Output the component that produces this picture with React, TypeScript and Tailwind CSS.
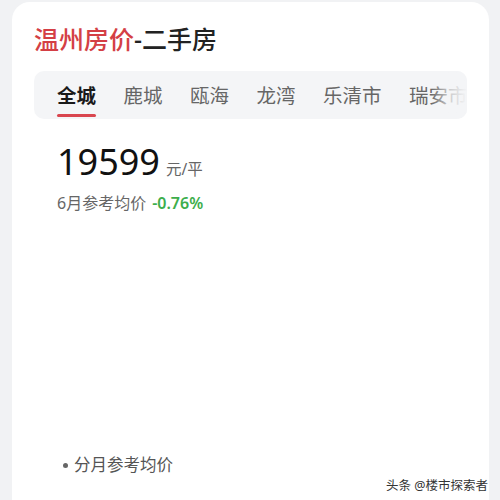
const tabs = ['全城', '鹿城', '瓯海', '龙湾', '乐清市', '瑞安市'];

export default function App() {
  return (
    <div
      className="relative w-[500px] h-[500px] overflow-hidden bg-[#f1f2f4] pl-[12px] pr-[11px] pt-[2px]"
      style={{ fontFamily: '"Noto Sans", "Noto Sans CJK SC", sans-serif' }}
    >
      <div className="h-full bg-white rounded-t-[18px] px-[22px] pt-[21px]">
        {/* Title */}
        <h1 className="text-[25px] leading-[32px] font-medium text-[#222]">
          <span className="text-[#d43f45]">温州房价</span>-二手房
        </h1>

        {/* District tabs */}
        <div className="relative mt-[16px] h-[48px] rounded-[10px] bg-[#f4f5f7] overflow-hidden">
          <div className="flex h-full gap-[27.5px] pl-[23px] whitespace-nowrap">
            {tabs.map((t, i) => (
              <div key={t} className="flex h-full flex-col items-center justify-end pb-[2px] shrink-0">
                <span
                  className={`text-[19.5px] leading-[26px] ${
                    i === 0 ? 'font-bold text-[#1a1a1a]' : 'text-[#666]'
                  }`}
                >
                  {t}
                </span>
                <span
                  className={`mt-[5px] h-[3px] w-full rounded-full ${
                    i === 0 ? 'bg-[#d9464f]' : 'bg-transparent'
                  }`}
                ></span>
              </div>
            ))}
          </div>
          <div className="absolute right-0 top-0 h-full w-[36px] bg-gradient-to-l from-[#f4f5f7] via-[#f4f5f7]/70 to-transparent"></div>
        </div>

        {/* Price */}
        <div className="pl-[23px]">
          <div className="mt-[25px] flex items-baseline gap-[6px]">
            <span className="text-[36px] leading-none text-[#111]">19599</span>
            <span className="text-[15.5px] leading-none text-[#666]">元/平</span>
          </div>
          <div className="mt-[12px] flex items-center gap-[6px] text-[16px] leading-[22px]">
            <span className="text-[#666]">6月参考均价</span>
            <span className="font-semibold text-[#3dae4c]">-0.76%</span>
          </div>

          <div className="mt-[240px] flex items-center gap-[6px] pl-[6px] text-[16.5px] leading-[22px] text-[#555]">
            <span className="h-[5px] w-[5px] rounded-full bg-[#666]"></span>
            <span>分月参考均价</span>
          </div>
        </div>
      </div>

      {/* Watermark */}
      <div className="absolute right-[12px] bottom-[6px] text-[12.5px] leading-[16px] text-[#333] [text-shadow:0_0_2px_#fff,0_0_2px_#fff]">
        头条 @楼市探索者
      </div>
    </div>
  );
}
